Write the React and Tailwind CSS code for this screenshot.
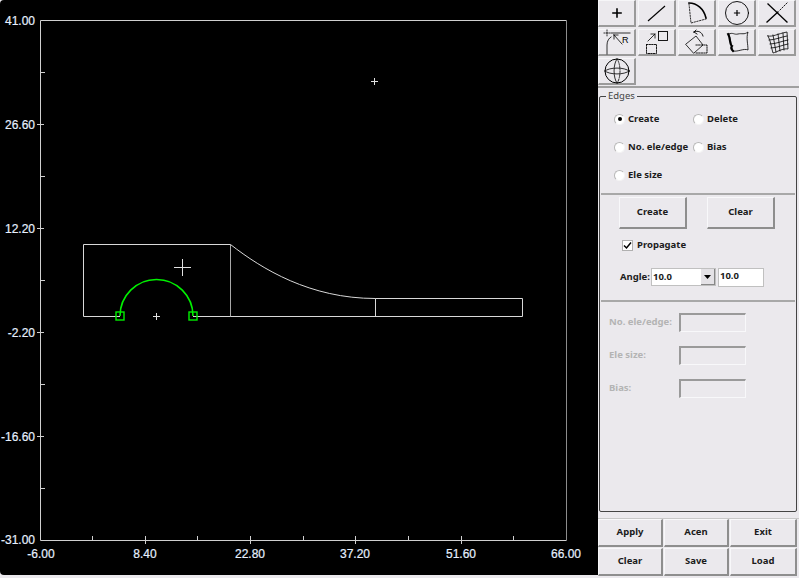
import React from "react";

const uiFont = "[font-family:'Noto_Sans',sans-serif]";

const yMajor = [
  { y: 124, label: "26.60" },
  { y: 228, label: "12.20" },
  { y: 332, label: "-2.20" },
  { y: 436, label: "-16.60" },
];
const yMinor = [72, 176, 280, 384, 488];
const xMajor = [
  { x: 145, label: "8.40" },
  { x: 250, label: "22.80" },
  { x: 355, label: "37.20" },
  { x: 461, label: "51.60" },
];
const xMinor = [92, 197, 303, 408, 513];

function Cross({ x, y, size }) {
  return (
    <path
      d={`M${x - size} ${y + 0.5}H${x + size + 1}M${x + 0.5} ${y - size}V${y + size + 1}`}
      stroke="#e0e0e0"
      fill="none"
    />
  );
}

function Plot() {
  return (
    <svg width="598" height="575" className="block">
      <g fontFamily="'Liberation Sans',sans-serif" fontSize="12" fill="#e6f0ff" stroke="#e6f0ff" strokeWidth="0.2">
        <text x="35" y="25" textAnchor="end">41.00</text>
        <text x="35" y="544" textAnchor="end">-31.00</text>
        {yMajor.map((t) => (
          <text key={t.y} x="35" y={t.y + 4.5} textAnchor="end">{t.label}</text>
        ))}
        <text x="41" y="558" textAnchor="middle">-6.00</text>
        <text x="566" y="558" textAnchor="middle">66.00</text>
        {xMajor.map((t) => (
          <text key={t.x} x={t.x} y="558" textAnchor="middle">{t.label}</text>
        ))}
      </g>
      <g stroke="#d0d0d0" fill="none">
        <path d="M40.5 20.5H566.5" />
        <path d="M40.5 20.5V540.5H566.5" />
        <path d="M566.5 20.5V540.5" stroke="#8c8c8c" />
        {yMajor.map((t) => (
          <path key={t.y} d={`M37 ${t.y + 0.5}H44`} />
        ))}
        {yMinor.map((y) => (
          <path key={y} d={`M40 ${y + 0.5}H45`} />
        ))}
        {xMajor.map((t) => (
          <path key={t.x} d={`M${t.x + 0.5} 536V544`} />
        ))}
        {xMinor.map((x) => (
          <path key={x} d={`M${x + 0.5} 536V540`} />
        ))}
      </g>
      <g stroke="#d8d8d8" fill="none">
        <path d="M83.5 316.5V244.5H230.5" />
        <path d="M83.5 316.5H120M193 316.5H522.5V298.5H375.5V316.5" />
        <path d="M230.5 244.5V316.5" stroke="#a8a8a8" />
        <path d="M230.5 244.5C262 269 310 298.5 375.5 298.5" />
      </g>
      <Cross x={374} y={81} size={3} />
      <Cross x={182} y={267} size={8} />
      <Cross x={156} y={316} size={3} />
      <g stroke="#00f000" fill="none">
        <path d="M120 316A36.5 36.5 0 0 1 193 316" strokeWidth="1.6" />
        <rect x="116" y="312" width="8" height="8" strokeWidth="1.4" />
        <rect x="189" y="312" width="8" height="8" strokeWidth="1.4" />
      </g>
    </svg>
  );
}

function ToolIcon({ children }) {
  return (
    <svg width="28" height="26" viewBox="0 0 28 26" fill="none" stroke="black" strokeLinecap="square">
      {children}
    </svg>
  );
}

const icons = [
  <path key="add" d="M14 9V17M10 13H18" strokeWidth="1.6" />,
  <path key="line" d="M5 21L22 6" strokeWidth="1.1" strokeLinecap="butt" />,
  <g key="arc">
    <path d="M6 3C14 3 21 9 23 18" strokeWidth="1.6" />
    <path d="M6 4L8 23L23 19" strokeWidth="0.8" strokeDasharray="1.2 1.6" />
  </g>,
  <g key="circle">
    <circle cx="14" cy="13" r="11.5" strokeWidth="0.9" />
    <path d="M14 10.5V15.5M11.5 13H16.5" strokeWidth="1.2" />
  </g>,
  <g key="cross">
    <path d="M5 4L24 22" strokeWidth="1.3" />
    <path d="M4 22L15 12" strokeWidth="1.3" />
    <path d="M17 10L24 3" strokeWidth="0.9" strokeDasharray="1.2 1.8" />
  </g>,
  <g key="fillet">
    <path d="M8 4H27" strokeWidth="0.8" />
    <path d="M4 25V16C4 12 6 9 8 8" strokeWidth="0.8" />
    <path d="M4 1V8M1 4H8" strokeWidth="0.8" strokeDasharray="1 1.4" />
    <path d="M11 6L19 15M11 6V10M11 6H15" strokeWidth="0.8" />
    <text x="19" y="14" fontSize="9" fill="black" stroke="none" fontFamily="'Liberation Sans',sans-serif">R</text>
  </g>,
  <g key="scale">
    <rect x="15.5" y="2.5" width="9" height="9" strokeWidth="0.9" />
    <rect x="3.5" y="15.5" width="10" height="9" strokeWidth="0.9" strokeDasharray="1.3 1.3" />
    <path d="M5 12L12 5M8 5H12V9" strokeWidth="0.8" />
  </g>,
  <g key="rotate">
    <path d="M3 15L13 7L20 16L11 24Z" strokeWidth="0.8" />
    <path d="M13 16H24V24H12" strokeWidth="0.9" strokeDasharray="1.3 1.3" />
    <path d="M11 3C15 1 19 3 20 7M11 3L13 1M11 3L14 5" strokeWidth="0.9" />
  </g>,
  <g key="warp">
    <path d="M6 5C10 3 11 6 15 5C19 4 21 6 25 3C23 9 25 15 25 21C21 19 15 23 10 22C8 16 8 11 6 5Z" strokeWidth="0.8" />
    <path d="M5 5C8 10 6 15 9 17C7 19 9 21 10 22" strokeWidth="2" />
  </g>,
  <g key="mesh" strokeWidth="0.8">
    <path d="M5 7C10 8 14 5 24 3L25 20C20 19 14 23 10 24C8 18 8 12 5 7Z" />
    <path d="M6 11C12 11 18 8 24 7M7 15C13 15 19 12 25 11M8 19C14 19 19 16 25 15M10 6L13 23M15 5L17 22M20 4L21 21" />
  </g>,
  <g key="sphere">
    <circle cx="14" cy="13" r="12" strokeWidth="1" />
    <path d="M2 13C6 9 22 9 26 13" strokeWidth="0.8" />
    <path d="M2 13C6 17 22 17 26 13" strokeWidth="0.8" />
    <path d="M14 1C10 6 10 20 14 25" strokeWidth="0.8" />
    <path d="M14 1C18 6 18 20 14 25" strokeWidth="0.8" strokeDasharray="1.3 1.3" />
  </g>,
];

function ToolGrid() {
  return (
    <div className="grid grid-cols-[repeat(5,38px)] gap-x-[2px] gap-y-[1px] h-[88px] border-b-2 border-[#a0a0a0] bg-[#ebe9ed]">
      {icons.map((icon, i) => (
        <button
          key={i}
          type="button"
          className="h-[27px] w-[38px] flex items-center justify-center bg-[#ebe9ed] border border-[#f6f6f8] border-r-[#9a9a9a] border-b-[#9a9a9a] border-b-2 border-r-2"
        >
          <ToolIcon>{icon}</ToolIcon>
        </button>
      ))}
    </div>
  );
}

function Radio({ label, checked }) {
  return (
    <label className="flex items-center gap-[3px] h-[14px]">
      <span className="w-[11px] h-[11px] rounded-full bg-white border border-[#b8b8b8] border-b-[#f4f4f4] border-r-[#f4f4f4] flex items-center justify-center shrink-0">
        {checked && <span className="w-[4px] h-[4px] rounded-full bg-black" />}
      </span>
      <span className="font-bold text-[9.5px] text-[#1c1c1c] whitespace-nowrap">{label}</span>
    </label>
  );
}

function RaisedButton({ children, className = "" }) {
  return (
    <button
      type="button"
      className={`flex items-center justify-center bg-[#ebe9ed] font-bold text-[9.5px] text-[#1c1c1c] border border-[#f8f8fa] border-r-[#8e8e8e] border-b-[#8e8e8e] border-r-2 border-b-2 ${className}`}
    >
      {children}
    </button>
  );
}

function DisabledField({ label }) {
  return (
    <div className="flex items-center h-[19px]">
      <span className="w-[70px] text-[9.5px] font-bold text-[#b4b4b4] whitespace-nowrap">{label}</span>
      <div className="w-[67px] h-[19px] bg-[#ebe9ed] border border-[#f8f8fa] border-t-2 border-l-2 border-t-[#9a9a9a] border-l-[#9a9a9a]" />
    </div>
  );
}

function EdgesPanel() {
  return (
    <fieldset className="relative mt-[8px] w-[198px] h-[416px] border border-[#444] rounded-[2px] ml-[1px]">
      <legend className="absolute -top-[7px] left-[6px] px-[2px] bg-[#ebe9ed] text-[9.5px] text-[#444] leading-[12px]">Edges</legend>

      <div className="grid grid-cols-[79px_79px] content-start gap-y-[14px] pl-[14px] pt-[15px] h-[96px]">
        <Radio label="Create" checked />
        <Radio label="Delete" />
        <Radio label="No. ele/edge" />
        <Radio label="Bias" />
        <Radio label="Ele size" />
      </div>

      <div className="h-[2px] bg-[#a8a8a8] mx-[1px]" />

      <div className="flex gap-[20px] pl-[19px] pt-[2px]">
        <RaisedButton className="w-[68px] h-[32px]">Create</RaisedButton>
        <RaisedButton className="w-[68px] h-[32px]">Clear</RaisedButton>
      </div>

      <label className="flex items-center gap-[4px] pl-[22px] pt-[8px] h-[24px]">
        <span className="w-[11px] h-[11px] bg-white border border-[#b0b0b0] flex items-center justify-center">
          <svg width="9" height="9" viewBox="0 0 9 9" fill="none" stroke="black" strokeWidth="1.5">
            <path d="M1 4.5L3.5 7L8 1.5" />
          </svg>
        </span>
        <span className="font-bold text-[9.5px] text-[#1c1c1c]">Propagate</span>
      </label>

      <div className="flex items-center pl-[20px] pt-[12px] h-[36px]">
        <span className="w-[31px] font-bold text-[9.5px] text-[#1c1c1c]">Angle:</span>
        <div className="w-[65px] h-[18px] bg-white border border-[#c0c0c0] flex items-center justify-between pl-[1px]">
          <span className="font-bold text-[9.5px] text-[#1c1c1c]">10.0</span>
          <span className="w-[14px] h-[16px] bg-[#e4e2e6] border-r border-b border-[#888] flex items-center justify-center">
            <svg width="7" height="4" viewBox="0 0 7 4"><path d="M0 0H7L3.5 4Z" fill="black" /></svg>
          </span>
        </div>
        <div className="ml-[2px] w-[46px] h-[19px] bg-white border border-[#c0c0c0] font-bold text-[9.5px] text-[#1c1c1c] pl-[1px] leading-[14px]">10.0</div>
      </div>

      <div className="h-[2px] bg-[#a8a8a8] mx-[1px] mt-[11px]" />

      <div className="flex flex-col gap-[14px] pl-[9px] pt-[11px]">
        <DisabledField label="No. ele/edge:" />
        <DisabledField label="Ele size:" />
        <DisabledField label="Bias:" />
      </div>
    </fieldset>
  );
}

function BottomButtons() {
  const labels = ["Apply", "Acen", "Exit", "Clear", "Save", "Load"];
  return (
    <div className="mt-[6px] grid grid-cols-[65px_65px_67px] gap-x-[1px] gap-y-[1px] border-t border-[#c8c8c8]">
      {labels.map((label) => (
        <RaisedButton key={label} className="h-[28px]">{label}</RaisedButton>
      ))}
    </div>
  );
}

export default function App() {
  return (
    <div className={`w-[799px] h-[578px] flex overflow-hidden bg-[#ebe9ed] ${uiFont}`}>
      <div className="w-[598px] h-[575px] bg-black rounded-l-[4px] shrink-0">
        <Plot />
      </div>
      <div className="w-[201px] h-[578px] flex flex-col">
        <ToolGrid />
        <EdgesPanel />
        <BottomButtons />
      </div>
    </div>
  );
}
